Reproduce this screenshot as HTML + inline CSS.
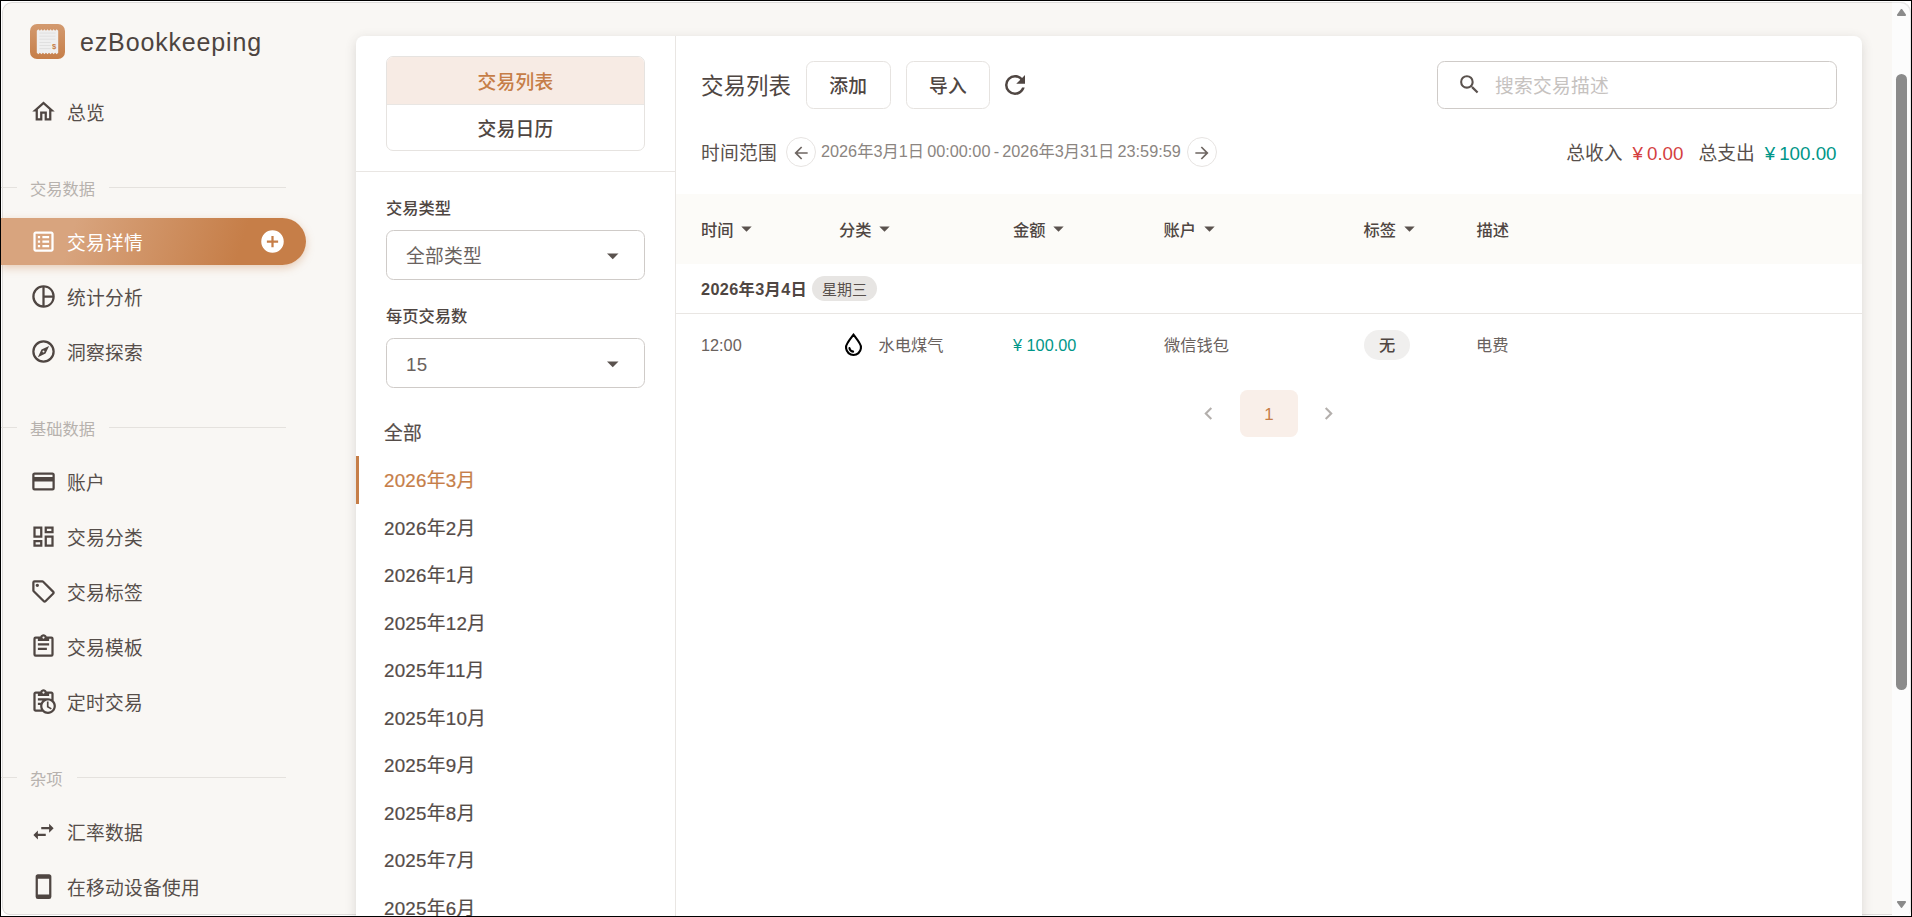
<!DOCTYPE html>
<html lang="zh-Hans">
<head>
<meta charset="utf-8">
<title>ezBookkeeping</title>
<style>
*{box-sizing:border-box;margin:0;padding:0}
html,body{width:1912px;height:917px;overflow:hidden;background:#000}
body{font-family:"Liberation Sans","Noto Sans CJK SC",sans-serif;color:#58504c;position:relative}
svg{display:block}
.abs{position:absolute}
#frame{position:absolute;left:1px;top:1px;width:1910px;height:915px;background:#fff;overflow:hidden}
#bg{position:absolute;left:1px;top:1px;width:1909px;height:913px;background:#f9f7f4;border-radius:10px 10px 8px 8px;box-shadow:inset 0 0 0 1px rgba(0,0,0,.1)}
/* everything inside #frame is positioned in page coords minus 1 */
#page{position:absolute;left:-1px;top:-1px;width:1912px;height:917px}
.t{position:absolute;white-space:nowrap;line-height:1}
/* sidebar */
.logo{left:30px;top:24px;width:35px;height:35px;border-radius:7px;background:linear-gradient(180deg,#d39a6f 0%,#c67e48 100%);overflow:hidden}
.brand{left:80px;top:25px;font-size:25px;line-height:35px;color:#4d4440;letter-spacing:.85px}
.nav{position:absolute;left:1px;width:305px;height:47px}
.nav .ic{position:absolute;left:29px;top:10px;width:27px;height:27px;fill:#4f4642}
.nav .lb{position:absolute;left:66px;top:2px;letter-spacing:.25px;line-height:47px;font-size:18.75px;color:#564e4a;white-space:nowrap}
.nav.on{background:linear-gradient(-72.47deg,#c67e48 22.16%,#d8a47e 76.47%);border-radius:0 24px 24px 0;box-shadow:0 3px 8px rgba(198,126,72,.35)}
.nav.on .ic{fill:#fff}
.nav.on .lb{color:#fff}
.sec{position:absolute;left:1px;width:325px;height:20px}
.sec i{position:absolute;top:8px;height:1px;background:#e5e2de}
.sec i.l{left:0;width:16px}
.sec i.r{left:108px;width:177px}
.sec span{position:absolute;left:29px;top:0;font-size:16.25px;line-height:20px;color:#b7b2ae;white-space:nowrap}
/* card */
#card{left:356px;top:36px;width:1506px;height:900px;background:#fff;border-radius:8px;box-shadow:0 3px 12px rgba(65,57,53,.16)}

.c{color:#58504c}
.m{font-weight:500}
.b{font-weight:700}
.hl{position:absolute;height:1px;background:#e9e6e3}
.vl{position:absolute;width:1px;background:#e9e6e3}
.tabs{left:386px;top:56px;width:259px;height:95px;border:1px solid #e6e3e0;border-radius:7px;overflow:hidden}
.tabs div{letter-spacing:.25px;height:47.5px;text-align:center;font-size:18.75px;font-weight:500;line-height:50px;color:#4f4642}
.tabs div.on{background:#f7ebe4;color:#c67e48;height:48px;line-height:51px;border-bottom:1px solid #e9e6e3}
.lab{font-size:16.25px;font-weight:500;color:#4f4642;line-height:24px}
.sel{position:absolute;left:386px;width:259px;height:49.5px;border:1px solid #cfcbc8;border-radius:7.5px}
.sel span{letter-spacing:.25px;position:absolute;left:19px;top:0;line-height:52.5px;font-size:18.75px;color:#6a625e;white-space:nowrap}
.sel svg{position:absolute;left:212px;top:11px;width:27.5px;height:27.5px;fill:#5a524e}
.mon{letter-spacing:.25px;position:absolute;left:356px;width:319px;height:47.5px;font-size:18.75px;font-weight:400;-webkit-text-stroke:.22px currentColor;color:#554c48;line-height:50.5px;padding-left:28px;white-space:nowrap}
.mon.on{color:#c67e48}
.mon.on:before{content:"";position:absolute;left:0;top:0;width:3px;height:47.5px;background:#c67e48}
.btn{letter-spacing:.25px;position:absolute;top:61px;height:47.5px;border:1px solid #e6e3e0;border-radius:7.5px;text-align:center;font-size:18.75px;font-weight:500;color:#4f4642;line-height:50.5px}
.circ{position:absolute;width:30px;height:30px;border:1px solid #e7e4e2;border-radius:50%}
.circ svg{position:absolute;left:4px;top:4.5px;width:20px;height:20px;fill:#6e6662}
.th{font-size:16.25px;font-weight:500;color:#4f4642;line-height:24px}
.tri{position:absolute;width:25px;height:25px;fill:#5a524e}
.chip{position:absolute;background:#e7e5e3;border-radius:15px;text-align:center;color:#58504c;white-space:nowrap}
.td{font-size:16.25px;color:#6a625e;line-height:24px}
</style>
</head>
<body>
<div id="frame"><div id="bg"></div><div id="page">

<!-- SIDEBAR -->
<div class="abs logo">
<svg width="35" height="35" viewBox="0 0 35 35"><path d="M6.80 6.70L8.33 5.20L9.86 6.70L11.39 5.20L12.91 6.70L14.44 5.20L15.97 6.70L17.50 5.20L19.03 6.70L20.56 5.20L22.09 6.70L23.61 5.20L25.14 6.70L26.67 5.20L28.20 6.70L28.20 28.70L26.67 30.20L25.14 28.70L23.61 30.20L22.09 28.70L20.56 30.20L19.03 28.70L17.50 30.20L15.97 28.70L14.44 30.20L12.91 28.70L11.39 30.20L9.86 28.70L8.33 30.20L6.80 28.70Z" fill="#efefef"/><g stroke="#dadada" stroke-width=".7"><path d="M9.4 9.1h16.1M9.4 12.2h16.1M9.4 15.2h16.1M9.4 18.5h11.3M9.4 21.5h11.3M9.4 24.6h11.3"/></g><text x="21.9" y="24.6" font-size="7.6" font-weight="bold" fill="#c67e48" font-family="Liberation Sans,sans-serif">$</text></svg>
</div>
<div class="t brand">ezBookkeeping</div>
<div class="nav" style="top:88px"><svg class="ic" viewBox="0 0 24 24"><path d="M12 5.69L17 10.19V18H15V12H9V18H7V10.19L12 5.69M12 3L2 12H5V20H11V14H13V20H19V12H22"/></svg><span class="lb">总览</span></div>
<div class="sec" style="top:179px"><i class="l"></i><span>交易数据</span><i class="r" style="left:108px;width:177px"></i></div>
<div class="nav on" style="top:218px"><svg class="ic" viewBox="0 0 24 24"><path d="M11 15H17V17H11V15M9 7H7V9H9V7M11 13H17V11H11V13M11 9H17V7H11V9M9 11H7V13H9V11M21 5V19C21 20.1 20.1 21 19 21H5C3.9 21 3 20.1 3 19V5C3 3.9 3.9 3 5 3H19C20.1 3 21 3.9 21 5M19 5H5V19H19V5M9 15H7V17H9V15Z"/></svg><span class="lb">交易详情</span><svg class="ic" style="left:258px" viewBox="0 0 24 24"><path d="M17,13H13V17H11V13H7V11H11V7H13V11H17M12,2A10,10 0 0,0 2,12A10,10 0 0,0 12,22A10,10 0 0,0 22,12A10,10 0 0,0 12,2Z"/></svg></div>
<div class="nav" style="top:273px"><svg class="ic" viewBox="0 0 24 24"><path d="M12 2A10 10 0 1 0 22 12A10 10 0 0 0 12 2M13 4.07A8 8 0 0 1 19.93 11H13V4.07M12 20A8 8 0 0 1 11 4.07V20M13 19.93V13H19.93A8 8 0 0 1 13 19.93Z"/></svg><span class="lb">统计分析</span></div>
<div class="nav" style="top:328px"><svg class="ic" viewBox="0 0 24 24"><path d="M7,17L10.2,10.2L17,7L13.8,13.8L7,17M12,11.1A0.9,0.9 0 0,0 11.1,12A0.9,0.9 0 0,0 12,12.9A0.9,0.9 0 0,0 12.9,12A0.9,0.9 0 0,0 12,11.1M12,2A10,10 0 0,1 22,12A10,10 0 0,1 12,22A10,10 0 0,1 2,12A10,10 0 0,1 12,2M12,4A8,8 0 0,0 4,12A8,8 0 0,0 12,20A8,8 0 0,0 20,12A8,8 0 0,0 12,4Z"/></svg><span class="lb">洞察探索</span></div>
<div class="sec" style="top:419px"><i class="l"></i><span>基础数据</span><i class="r" style="left:108px;width:177px"></i></div>
<div class="nav" style="top:458px"><svg class="ic" viewBox="0 0 24 24"><path d="M20,8H4V6H20M20,18H4V12H20M20,4H4C2.89,4 2,4.89 2,6V18A2,2 0 0,0 4,20H20A2,2 0 0,0 22,18V6C22,4.89 21.1,4 20,4Z"/></svg><span class="lb">账户</span></div>
<div class="nav" style="top:513px"><svg class="ic" viewBox="0 0 24 24"><path d="M19,5V7H15V5H19M9,5V11H5V5H9M19,13V19H15V13H19M9,17V19H5V17H9M21,3H13V9H21V3M11,3H3V13H11V3M21,11H13V21H21V11M11,15H3V21H11V15Z"/></svg><span class="lb">交易分类</span></div>
<div class="nav" style="top:568px"><svg class="ic" viewBox="0 0 24 24"><path d="M21.41,11.58L12.41,2.58C12.04,2.21 11.53,2 11,2H4A2,2 0 0,0 2,4V11C2,11.53 2.21,12.04 2.59,12.41L11.58,21.41C11.95,21.78 12.47,22 13,22C13.53,22 14.04,21.79 14.41,21.41L21.41,14.41C21.79,14.04 22,13.53 22,13C22,12.47 21.79,11.96 21.41,11.58M13,20L4,11V4H11L20,13M6.5,5A1.5,1.5 0 0,1 8,6.5A1.5,1.5 0 0,1 6.5,8A1.5,1.5 0 0,1 5,6.5A1.5,1.5 0 0,1 6.5,5Z"/></svg><span class="lb">交易标签</span></div>
<div class="nav" style="top:623px"><svg class="ic" viewBox="0 0 24 24"><path d="M19,3H14.82C14.4,1.84 13.3,1 12,1C10.7,1 9.6,1.84 9.18,3H5A2,2 0 0,0 3,5V19A2,2 0 0,0 5,21H19A2,2 0 0,0 21,19V5A2,2 0 0,0 19,3M12,3A1,1 0 0,1 13,4A1,1 0 0,1 12,5A1,1 0 0,1 11,4A1,1 0 0,1 12,3M7,7H17V5H19V19H5V5H7V7M17,11H7V9H17V11M15,15H7V13H15V15Z"/></svg><span class="lb">交易模板</span></div>
<div class="nav" style="top:678px"><svg class="ic" viewBox="0 0 24 24"><path d="M21 11.11V5C21 3.9 20.11 3 19 3H14.82C14.4 1.84 13.3 1 12 1S9.6 1.84 9.18 3H5C3.9 3 3 3.9 3 5V19C3 20.11 3.9 21 5 21H11.11C12.37 22.24 14.09 23 16 23C19.87 23 23 19.87 23 16C23 14.09 22.24 12.37 21 11.11M12 3C12.55 3 13 3.45 13 4S12.55 5 12 5 11 4.55 11 4 11.45 3 12 3M5 19V5H7V7H17V5H19V9.68C18.09 9.25 17.08 9 16 9H7V11H11.1C10.5 11.57 10.04 12.25 9.68 13H7V15H9.08C9.03 15.33 9 15.66 9 16C9 17.08 9.25 18.09 9.68 19H5M16 21C13.24 21 11 18.76 11 16S13.24 11 16 11 21 13.24 21 16 18.76 21 16 21M16.5 16.25L19.36 17.94L18.61 19.16L15 17V12H16.5V16.25Z"/></svg><span class="lb">定时交易</span></div>
<div class="sec" style="top:769px"><i class="l"></i><span>杂项</span><i class="r" style="left:76px;width:209px"></i></div>
<div class="nav" style="top:808px"><svg class="ic" viewBox="0 0 24 24"><path d="M21,9L17,5V8H10V10H17V13M7,11L3,15L7,19V16H14V14H7V11Z"/></svg><span class="lb">汇率数据</span></div>
<div class="nav" style="top:863px"><svg class="ic" viewBox="0 0 24 24"><path d="M17,19H7V5H17M17,1H7C5.89,1 5,1.89 5,3V21A2,2 0 0,0 7,23H17A2,2 0 0,0 19,21V3C19,1.89 18.1,1 17,1Z"/></svg><span class="lb">在移动设备使用</span></div>

<!-- CARD -->
<div class="abs" id="card"></div>
<div class="vl" style="left:675px;top:36px;height:881px"></div>
<div class="abs tabs"><div class="on">交易列表</div><div>交易日历</div></div>
<div class="hl" style="left:356px;top:171px;width:319px"></div>
<div class="t lab" style="left:386px;top:196px">交易类型</div>
<div class="sel" style="top:230px"><span>全部类型</span><svg viewBox="0 0 24 24"><path d="M7,10L12,15L17,10H7Z"/></svg></div>
<div class="t lab" style="left:386px;top:304px">每页交易数</div>
<div class="sel" style="top:338px"><span>15</span><svg viewBox="0 0 24 24"><path d="M7,10L12,15L17,10H7Z"/></svg></div>
<div class="mon" style="top:408.7px">全部</div>
<div class="mon on" style="top:456.2px">2026年3月</div>
<div class="mon" style="top:503.7px">2026年2月</div>
<div class="mon" style="top:551.2px">2026年1月</div>
<div class="mon" style="top:598.7px">2025年12月</div>
<div class="mon" style="top:646.2px">2025年11月</div>
<div class="mon" style="top:693.7px">2025年10月</div>
<div class="mon" style="top:741.2px">2025年9月</div>
<div class="mon" style="top:788.7px">2025年8月</div>
<div class="mon" style="top:836.2px">2025年7月</div>
<div class="mon" style="top:883.7px">2025年6月</div>
<!-- right top -->
<div class="t c" style="left:701px;top:71px;font-size:22.5px;line-height:32px;color:#4f4642">交易列表</div>
<div class="btn" style="left:806px;width:84.5px">添加</div>
<div class="btn" style="left:906px;width:84px">导入</div>
<svg class="abs" style="left:1000px;top:70px;width:30px;height:30px;fill:#4f4642" viewBox="0 0 24 24"><path d="M17.65,6.35C16.2,4.9 14.21,4 12,4A8,8 0 0,0 4,12A8,8 0 0,0 12,20C15.73,20 18.84,17.45 19.73,14H17.65C16.83,16.33 14.61,18 12,18A6,6 0 0,1 6,12A6,6 0 0,1 12,6C13.66,6 15.14,6.69 16.22,7.78L13,11H20V4L17.65,6.35Z"/></svg>
<div class="abs" style="left:1437px;top:61px;width:400px;height:48px;border:1px solid #cfcbc8;border-radius:7.5px"></div>
<svg class="abs" style="left:1456.5px;top:71.5px;width:25px;height:25px;fill:#5a524e" viewBox="0 0 24 24"><path d="M9.5,3A6.5,6.5 0 0,1 16,9.5C16,11.11 15.41,12.59 14.44,13.73L14.71,14H15.5L20.5,19L19,20.5L14,15.5V14.71L13.73,14.44C12.59,15.41 11.11,16 9.5,16A6.5,6.5 0 0,1 3,9.5A6.5,6.5 0 0,1 9.5,3M9.5,5C7,5 5,7 5,9.5C5,12 7,14 9.5,14C12,14 14,12 14,9.5C14,7 12,5 9.5,5Z"/></svg>
<div class="t" style="left:1495px;top:71.5px;font-size:18.75px;line-height:30px;color:#c6c2bf;letter-spacing:.25px">搜索交易描述</div>
<div class="t" style="left:701px;top:138.5px;font-size:18.75px;line-height:30px;color:#58504c;letter-spacing:.25px">时间范围</div>
<div class="circ" style="left:786px;top:137px"><svg viewBox="0 0 24 24"><path d="M20,11V13H8L13.5,18.5L12.08,19.92L4.16,12L12.08,4.08L13.5,5.5L8,11H20Z"/></svg></div>
<div class="t" id="range" style="left:821px;top:137px;font-size:16.25px;line-height:28px;color:#8b8581;word-spacing:-1.3px">2026年3月1日 00:00:00 - 2026年3月31日 23:59:59</div>
<div class="circ" style="left:1187px;top:137px"><svg viewBox="0 0 24 24"><path d="M4,11V13H16L10.5,18.5L11.92,19.92L19.84,12L11.92,4.08L10.5,5.5L16,11H4Z"/></svg></div>
<div class="t" id="totals" style="right:75.5px;top:138.5px;font-size:18.75px;line-height:30px;color:#58504c">总收入<span style="margin-left:10px;color:#d43f3f;word-spacing:-1.2px">¥ 0.00</span><span style="margin-left:15px">总支出</span><span style="margin-left:10px;color:#009688;word-spacing:-1.2px">¥ 100.00</span></div>
<!-- table -->
<div class="abs" style="left:676px;top:194px;width:1186px;height:70px;background:#fcfbf8"></div>
<div class="t th" style="left:701px;top:218px">时间</div>
<svg class="tri" style="left:734.3px;top:216.2px" viewBox="0 0 24 24"><path d="M7,10L12,15L17,10H7Z"/></svg>
<div class="t th" style="left:839px;top:218px">分类</div>
<svg class="tri" style="left:872.3px;top:216.2px" viewBox="0 0 24 24"><path d="M7,10L12,15L17,10H7Z"/></svg>
<div class="t th" style="left:1013px;top:218px">金额</div>
<svg class="tri" style="left:1046.3px;top:216.2px" viewBox="0 0 24 24"><path d="M7,10L12,15L17,10H7Z"/></svg>
<div class="t th" style="left:1163.5px;top:218px">账户</div>
<svg class="tri" style="left:1196.8px;top:216.2px" viewBox="0 0 24 24"><path d="M7,10L12,15L17,10H7Z"/></svg>
<div class="t th" style="left:1363.5px;top:218px">标签</div>
<svg class="tri" style="left:1396.8px;top:216.2px" viewBox="0 0 24 24"><path d="M7,10L12,15L17,10H7Z"/></svg>
<div class="t th" style="left:1476.5px;top:218px">描述</div>
<div class="t b" style="left:701px;top:277px;font-size:16.25px;line-height:24px;color:#4f4642;letter-spacing:.35px">2026年3月4日</div>
<div class="chip" style="left:812px;top:276px;width:65px;height:25px;font-size:15px;line-height:27px">星期三</div>
<div class="hl" style="left:676px;top:313px;width:1186px"></div>
<div class="t td" style="left:701px;top:333px">12:00</div>
<svg class="abs" style="left:840px;top:330px;width:28px;height:28px" viewBox="0 0 28 28" fill="none" stroke="#000" stroke-width="2.1" stroke-linecap="round" stroke-linejoin="miter"><path d="M13.5 4.7C15.2 7 18 10.5 19.6 13.25A7.45 7.45 0 1 1 7.4 13.25C9 10.5 11.8 7 13.5 4.7Z"/><path d="M9.45 18.1A4.25 4.25 0 0 0 13.1 21.6"/></svg>
<div class="t td" style="left:878.5px;top:333px">水电煤气</div>
<div class="t td" style="left:1013px;top:333px;color:#009688">¥ 100.00</div>
<div class="t td" style="left:1164px;top:333px">微信钱包</div>
<div class="chip m" style="left:1364px;top:330px;width:46px;height:30px;font-size:16.25px;line-height:31px;background:#f0efee;color:#4f4642">无</div>
<div class="t td" style="left:1476px;top:333px">电费</div>
<!-- pagination -->
<svg class="abs" style="left:1196px;top:401px;width:25px;height:25px;fill:#b3afac" viewBox="0 0 24 24"><path d="M15.41,16.58L10.83,12L15.41,7.41L14,6L8,12L14,18L15.41,16.58Z"/></svg>
<div class="abs" style="left:1240px;top:390px;width:58px;height:47px;border-radius:7.5px;background:#f9efe9;text-align:center;font-size:16.9px;line-height:49.5px;color:#c67e48">1</div>
<svg class="abs" style="left:1315.5px;top:401px;width:25px;height:25px;fill:#b3afac" viewBox="0 0 24 24"><path d="M8.59,16.58L13.17,12L8.59,7.41L10,6L16,12L10,18L8.59,16.58Z"/></svg>
<!-- scrollbar -->
<div class="abs" style="left:1892px;top:2px;width:19px;height:913px;background:#fcfcfc;border-radius:0 10px 5px 0;box-shadow:inset -1px 1px 0 rgba(0,0,0,.08)"></div>
<div class="abs" style="left:1896px;top:74px;width:11px;height:616px;border-radius:5.5px;background:#8b8b8b"></div>
<svg class="abs" style="left:1896px;top:8px;width:11px;height:9px" viewBox="0 0 11 9"><path d="M5.5 1.8L9.2 7.1H1.8Z" fill="#8b8b8b" stroke="#8b8b8b" stroke-width="1.7" stroke-linejoin="round"/></svg>
<svg class="abs" style="left:1896px;top:900px;width:11px;height:9px" viewBox="0 0 11 9"><path d="M5.5 7L9.2 1.9H1.8Z" fill="#8b8b8b" stroke="#8b8b8b" stroke-width="1.7" stroke-linejoin="round"/></svg>

</div></div>
</body>
</html>
